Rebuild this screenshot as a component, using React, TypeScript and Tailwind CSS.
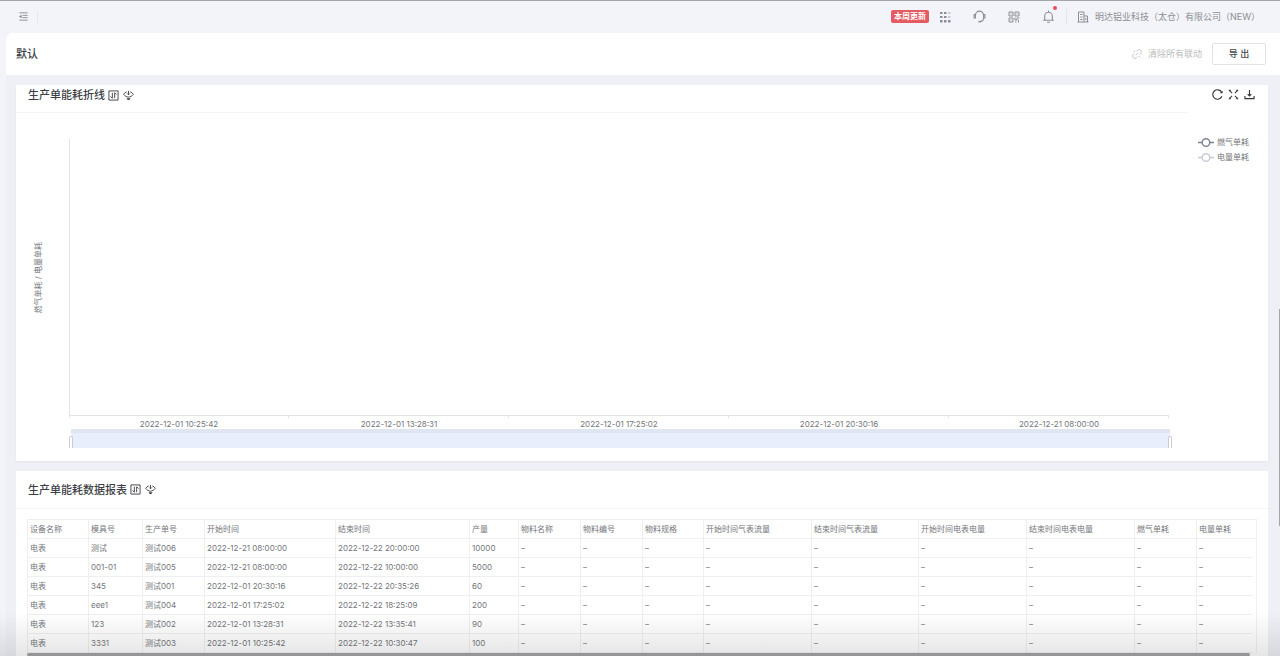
import type { ReactNode } from "react";

const COLUMNS = [
  { title: "设备名称", width: 61 },
  { title: "模具号", width: 54 },
  { title: "生产单号", width: 62 },
  { title: "开始时间", width: 131 },
  { title: "结束时间", width: 134 },
  { title: "产量", width: 49 },
  { title: "物料名称", width: 62 },
  { title: "物料编号", width: 62 },
  { title: "物料规格", width: 61 },
  { title: "开始时间气表流量", width: 108 },
  { title: "结束时间气表流量", width: 107 },
  { title: "开始时间电表电量", width: 108 },
  { title: "结束时间电表电量", width: 108 },
  { title: "燃气单耗", width: 62 },
  { title: "电量单耗", width: 56 },
];

const ROWS = [
  ["电表", "测试", "测试006", "2022-12-21 08:00:00", "2022-12-22 20:00:00", "10000"],
  ["电表", "001-01", "测试005", "2022-12-21 08:00:00", "2022-12-22 10:00:00", "5000"],
  ["电表", "345", "测试001", "2022-12-01 20:30:16", "2022-12-22 20:35:26", "60"],
  ["电表", "eee1", "测试004", "2022-12-01 17:25:02", "2022-12-22 18:25:09", "200"],
  ["电表", "123", "测试002", "2022-12-01 13:28:31", "2022-12-22 13:35:41", "90"],
  ["电表", "3331", "测试003", "2022-12-01 10:25:42", "2022-12-22 10:30:47", "100"],
];

const TIMES = [
  "2022-12-01 10:25:42",
  "2022-12-01 13:28:31",
  "2022-12-01 17:25:02",
  "2022-12-01 20:30:16",
  "2022-12-21 08:00:00",
];

function Icon({ className, children }: { className: string; children: ReactNode }) {
  return (
    <svg
      viewBox="0 0 24 24"
      className={className}
      fill="none"
      stroke="currentColor"
      strokeWidth="2"
      aria-hidden="true"
    >
      {children}
    </svg>
  );
}

function IconButton({ label, children }: { label: string; children: ReactNode }) {
  return (
    <button type="button" aria-label={label} className="relative block">
      {children}
    </button>
  );
}

function TopBar() {
  return (
    <header className="flex h-[33px] items-center justify-between border-t border-[#a5a6a9] pr-4 pb-px pl-[18px] text-[#8b8d92]">
      <div className="flex items-center gap-2">
        <IconButton label="折叠菜单">
          <Icon className="size-[11px]">
            <path d="M3 4h18M10 9.500h11M10 14.500h11M3 20h18" />
            <path d="M8 8v8l-6-4z" fill="currentColor" stroke="none" />
          </Icon>
        </IconButton>
        <span className="h-3 w-px bg-[#e6e8ed]" />
      </div>

      <div className="flex items-center">
        <a
          href="#updates"
          className="mr-2.5 rounded-xs bg-[#e65a62] px-[3px] text-[8px] leading-[13px] font-bold text-white"
        >
          本周更新
        </a>
        <div className="flex items-center gap-[22px]">
          <IconButton label="应用">
            <svg viewBox="0 0 12 12" className="size-3" fill="#8b8d97" aria-hidden="true">
              <path d="M1 1h2.500v2H1zM5 1h2.500v2H5zM1 5h2.500v2H1zM5 5h2.500v2H5zM1 9h2.500v2.500H1zM5 9h2.500v2.500H5zM9 9h2.500v2.500H9z" />
              <path d="M9 1h2.500v2H9zM9 5h2.500v2H9z" fill="#c3cbe0" />
            </svg>
          </IconButton>
          <IconButton label="客服">
            <Icon className="size-[13px]">
              <path d="M4.500 15V9.500a7.500 7.500 0 0 1 15 0V15c0 3-2 5-4.500 6" />
              <path d="M4 8.500H2v6h2.500M20 8.500h2v6h-2.500" />
              <path d="M10 21.500h5" strokeWidth="3" />
            </Icon>
          </IconButton>
          <IconButton label="二维码">
            <Icon className="size-3">
              <path d="M2 2h8v8H2zM14 2h8v8h-8zM2 14h8v8H2z" />
              <path d="M5 6h2M17 6h2M5 18h2M14 13v5h4v-4h5M14 22h3M21 18v5" />
            </Icon>
          </IconButton>
          <IconButton label="通知">
            <Icon className="size-[13px]">
              <path d="M5 19V11a7 7 0 0 1 14 0v8M2 19h20M12 1v3M9.500 22.500h5" />
            </Icon>
            <span className="absolute -top-1 -right-0.5 size-1 rounded-full bg-[#ec4b55]" />
          </IconButton>
        </div>
        <span className="mr-2.5 ml-[11px] h-4 w-px bg-[#e3e5ea]" />
        <a href="#company" className="flex items-center gap-1.5 pr-1 text-[9px] leading-4">
          <Icon className="size-3">
            <path d="M1 22h22M3 22V2h11v20M14 10h7v12M6.500 7H11M6.500 12H11M6.500 17H11M17.500 14v4" />
          </Icon>
          明达铝业科技（太仓）有限公司（NEW）
        </a>
      </div>
    </header>
  );
}

function PageBar() {
  return (
    <div className="flex h-[42px] items-center justify-between rounded-tl-md bg-white pr-3.5 pl-2.5">
      <h1 className="text-[11px] font-medium text-[#3c3f45]">默认</h1>
      <div className="flex items-center gap-2.5 text-[9px]">
        <button type="button" disabled className="flex items-center gap-1.5 text-[#bcbdc0]">
          <Icon className="size-2.5">
            <path d="M10 6l3-3a5 5 0 0 1 8 8l-3 3M14 18l-3 3a5 5 0 0 1-8-8l3-3M9 15l6-6M4 4l3 3M17 17l3 3" />
          </Icon>
          清除所有联动
        </button>
        <button
          type="button"
          className="h-[22px] w-[54px] rounded-xs border border-[#e2e3e6] font-medium text-[#44474c]"
        >
          导 出
        </button>
      </div>
    </div>
  );
}

function CardTitle({ children }: { children: ReactNode }) {
  return (
    <div className="flex items-center gap-[3px] text-[#3c3f45]">
      <h2 className="text-[11px] leading-4 font-medium">{children}</h2>
      <IconButton label="筛选">
        <Icon className="size-[11px]">
          <path d="M2 2h20v20H2z" />
          <path d="M9.500 6v12M9.500 18l-4-4M14.500 18V6M14.500 6l4 4" />
        </Icon>
      </IconButton>
      <IconButton label="联动">
        <Icon className="ml-px size-[11px]">
          <path d="M8 4C5 5 3 7 1.500 9.500 4 13 8 15.500 12 15.500s8-2.500 10.500-6C21 7 19 5 16 4" />
          <path d="M12 2v8M9 7.500l3 3 3-3" />
          <path d="M9 19h6l-3 3z" fill="currentColor" />
        </Icon>
      </IconButton>
    </div>
  );
}

function LegendItem({ color, label }: { color: string; label: string }) {
  return (
    <li className="flex items-center gap-[3px] leading-[15px]">
      <svg viewBox="0 0 16 10" className="h-2.5 w-4" stroke={color} fill="none" aria-hidden="true">
        <path d="M0 4.500h4M12 4.500h4" strokeWidth="1.500" />
        <circle cx="8" cy="4.500" r="3.800" strokeWidth="1.400" />
      </svg>
      {label}
    </li>
  );
}

function ChartCard() {
  return (
    <section className="bg-white pb-[13px] shadow-xs">
      <div className="flex h-[27px] items-start pl-3">
        <div className="flex-1 self-stretch pt-0.5">
          <CardTitle>生产单能耗折线</CardTitle>
        </div>
        <div className="flex gap-[5px] pt-1 pr-[13px] text-[#34373c]">
          <IconButton label="刷新">
            <Icon className="size-[11px]">
              <path d="M21 7A10.300 10.300 0 1 0 21.500 16" strokeWidth="2.500" />
              <path d="M23 3v6h-6z" fill="currentColor" stroke="none" />
            </Icon>
          </IconButton>
          <IconButton label="全屏">
            <Icon className="size-[11px]">
              <path
                d="M3 3l6 6M21 3l-6 6M3 21l6-6M21 21l-6-6M3 5V3h3M18 3h3v2M3 19v2h3M18 21h3v-2"
                strokeWidth="2.200"
              />
            </Icon>
          </IconButton>
          <IconButton label="下载">
            <Icon className="size-[11px]">
              <path d="M12 2v13M8 11l4 4 4-4M2 15v6h20v-6" strokeWidth="2.500" />
            </Icon>
          </IconButton>
        </div>
      </div>
      <div className="mr-20 h-px bg-[#f3f4f6]" />

      <div className="flex pt-[26px] pr-[19px] pl-4 text-[8px] text-[#74767b]">
        <div className="flex h-[278px] w-[37px] items-center">
          <span className="rotate-180 leading-3 whitespace-nowrap [text-orientation:sideways] [writing-mode:vertical-rl]">
            燃气单耗 / 电量单耗
          </span>
        </div>
        <div className="min-w-0 flex-1">
          <div className="h-[277px] border-b border-l border-[#e2e4ea]" />
          <div className="grid grid-cols-5 bg-[linear-gradient(#e2e4ea,#e2e4ea)] bg-size-[1px_2px] bg-left-top bg-no-repeat text-center leading-[10px]">
            {TIMES.map((t) => (
              <div
                key={t}
                className="bg-[linear-gradient(#e2e4ea,#e2e4ea)] bg-size-[1px_2px] bg-right-top bg-no-repeat pt-[3px]"
              >
                {t}
              </div>
            ))}
          </div>
          <div className="relative ml-0.5 h-[19px] -mr-px border-t-4 border-[#dfe6f2] bg-[#e8eefc]">
            <span className="absolute bottom-0 -left-0.5 h-3 w-1 rounded-t-xs border border-b-0 border-[#c9ccd2] bg-white" />
            <span className="absolute -right-0.5 bottom-0 h-3 w-1 rounded-t-xs border border-b-0 border-[#c9ccd2] bg-white" />
          </div>
        </div>
        <ul className="-mt-1 ml-[29px]">
          <LegendItem color="#7b8296" label="燃气单耗" />
          <LegendItem color="#c6cad6" label="电量单耗" />
        </ul>
      </div>
    </section>
  );
}

function TableCard() {
  return (
    <section className="flex-1 bg-white">
      <div className="flex h-[38px] items-center border-b border-[#f3f4f6] pl-3">
        <CardTitle>生产单能耗数据报表</CardTitle>
      </div>
      <div className="px-[11px] pt-2.5">
        <table className="w-full table-fixed border-separate border-spacing-0 border-t border-r border-l border-[#eeeff2] text-left text-[8px] text-[#74767b]">
          <colgroup>
            {COLUMNS.map((c) => (
              <col key={c.title} style={{ width: c.width }} />
            ))}
            <col className="w-[3px]" />
          </colgroup>
          <thead>
            <tr>
              {COLUMNS.map((c, i) => (
                <th
                  key={c.title}
                  colSpan={i === COLUMNS.length - 1 ? 2 : 1}
                  className="h-[19px] border-r border-b border-[#eeeff2] p-0 pl-0.5 font-normal whitespace-nowrap last:border-r-0"
                >
                  {c.title}
                </th>
              ))}
            </tr>
          </thead>
          <tbody>
            {ROWS.map((row) => (
              <tr key={row[2]}>
                {COLUMNS.map((c, i) => (
                  <td
                    key={c.title}
                    className="h-[19px] border-r border-b border-[#eeeff2] p-0 pl-0.5 whitespace-nowrap last:border-r-0"
                  >
                    {row[i] ?? "–"}
                  </td>
                ))}
              </tr>
            ))}
          </tbody>
        </table>
        <div className="mr-[7px] h-[3px] rounded-full bg-[#a3a5a6]" />
      </div>
    </section>
  );
}

export default function App() {
  return (
    <div className="relative flex min-h-screen flex-col bg-[#f3f4f9] font-[Inter,'Noto_Sans_CJK_SC',sans-serif]">
      <TopBar />
      <main className="ml-1.5 flex flex-1 flex-col bg-[#eff0f5]">
        <PageBar />
        <div className="flex flex-1 flex-col gap-2.5 pt-2.5 pr-3 pl-2.5">
          <ChartCard />
          <TableCard />
        </div>
      </main>
      <div className="pointer-events-none absolute inset-x-0 bottom-0 h-11 bg-linear-to-b from-transparent to-black/10" />
      <div className="absolute top-[309px] right-0 h-[217px] w-px bg-[#a3a5a6]" />
    </div>
  );
}
